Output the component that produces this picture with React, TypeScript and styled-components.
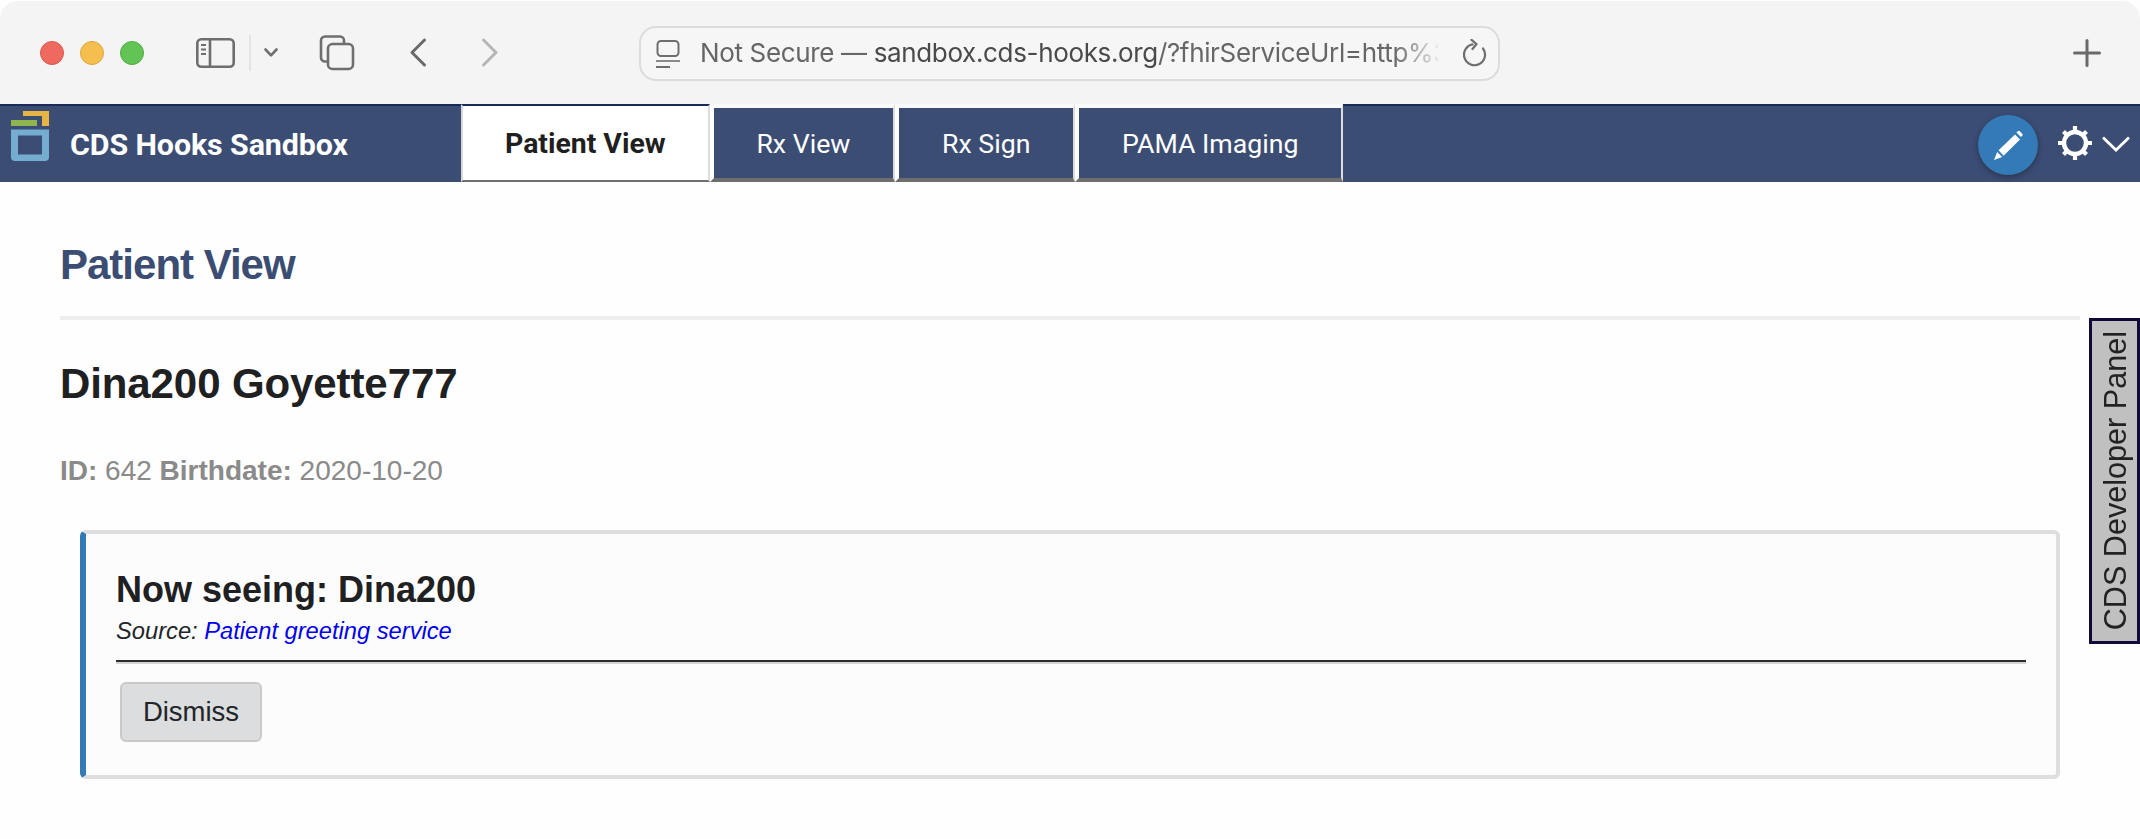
import React from "react";
import styled, { createGlobalStyle } from "styled-components";

const Global = createGlobalStyle`
  html, body { margin: 0; padding: 0; background: #fefefe; }
  body { width: 2140px; height: 839px; overflow: hidden; position: relative; font-family: "Liberation Sans", Arial, sans-serif; color: #212529; }
`;

const Toolbar = styled.header`
  height: 103px; margin-top: 1px; background: #f4f4f4; border-radius: 18px 18px 0 0;
  display: flex; align-items: center; position: relative;
`;
const Lights = styled.div`display: flex; gap: 16px; margin-left: 40px;`;
const Light = styled.span<{ $c: string; $b: string }>`
  width: 24px; height: 24px; border-radius: 50%; box-sizing: border-box;
  background: ${p => p.$c}; border: 1px solid ${p => p.$b};
`;
const ToolIcon = styled.svg<{ $left: number }>`
  display: block; flex: none; margin-left: ${p => p.$left}px; overflow: visible;
`;
const ToolDivider = styled.span`
  width: 2px; height: 36px; background: #e4e4e4; margin-left: 14px; flex: none;
`;
const UrlBar = styled.div`
  width: 861px; height: 55px; box-sizing: border-box; margin-left: 140px; margin-top: 1px;
  border: 2px solid #dcdcdc; border-radius: 17px; background: #f6f6f6;
  display: flex; align-items: center; padding: 0 10px 0 15px; flex: none;
`;
const PageGlyph = styled.svg`display: block; flex: none; margin-top: 1px;`;
const ReloadGlyph = styled.svg`display: block; flex: none; margin-left: 25px;`;
const UrlText = styled.div`
  width: 738px; margin-left: 20px; white-space: nowrap; overflow: hidden; flex: none;
  font: 400 26px/34px Inter, "Liberation Sans", sans-serif; letter-spacing: -0.35px; color: #666;
  -webkit-mask-image: linear-gradient(to right, #000 94%, rgba(0,0,0,.1) 100%);
  mask-image: linear-gradient(to right, #000 94%, rgba(0,0,0,.1) 100%);
`;
const Host = styled.span`color: #4a4a4a;`;
const PlusSlot = styled.div`margin-left: auto; margin-right: 39px; display: flex;`;

const Nav = styled.nav`
  height: 78px; box-sizing: border-box; background: #3c4d74; border-top: 2px solid #1a2b59;
  display: flex; align-items: stretch; color: #fff;
`;
const Brand = styled.div`
  width: 461px; flex: none; display: flex; align-items: center; box-sizing: border-box; padding-left: 11px;
`;
const BrandLogo = styled.svg`display: block; flex: none; margin-bottom: 16px;`;
const BrandName = styled.span`
  margin-left: 21px; margin-top: 2px; font: 700 30.4px/34px Roboto, "Liberation Sans", sans-serif; color: #fff; letter-spacing: -0.1px;
`;
const Tabs = styled.div`display: flex; align-items: stretch; margin-top: -2px;`;
const Tab = styled.div<{ $active?: boolean }>`
  box-sizing: border-box; display: flex; align-items: center; justify-content: center;
  font: ${p => (p.$active ? "700 28.4px" : "400 26.7px")}/34px Roboto, "Liberation Sans", sans-serif;
  padding: 2px ${p => (p.$active ? "42px" : "42.8px")} 0;
  color: ${p => (p.$active ? "#1f1f1f" : "#fff")};
  background: ${p => (p.$active ? "#fff" : "#3c4d74")};
  border-style: solid;
  border-width: 4px 2px ${p => (p.$active ? 2 : 4)}px 4px;
  border-color: ${p => (p.$active ? "#1a2b59" : "#fafafa")} #dcdcdc #6e6e6e #fff;
  ${p => (p.$active ? "border-top-width: 2px; border-left-width: 2px; border-left-color: #d8d8d8;" : "")}
`;
const NavRight = styled.div`
  margin-left: auto; display: flex; align-items: center; padding-right: 10px;
`;
const EditButton = styled.button`
  width: 60px; height: 60px; border-radius: 50%; border: 0; padding: 0; background: #337ab7;
  box-shadow: 0 2px 6px rgba(0,0,0,.35); display: flex; margin-top: 1px;
`;
const GearIcon = styled.svg`display: block; margin-left: 19px; margin-top: -3px;`;
const ChevronIcon = styled.svg`display: block; margin-left: 9px; margin-top: -1px;`;

const Main = styled.main`padding: 59px 60px 0;`;
const PageTitle = styled.h1`
  margin: 0; font: 700 42px/48px "Liberation Sans", Arial, sans-serif; color: #3c4d74; letter-spacing: -1px;
`;
const Rule = styled.hr`
  margin: 27px 0 0; border: 0; height: 4px; background: #eeeeee;
`;
const PatientName = styled.h2`
  margin: 40px 0 0; font: 700 42px/48px "Liberation Sans", Arial, sans-serif; color: #1f2022; letter-spacing: -0.1px;
`;
const PatientMeta = styled.div`
  margin-top: 45px; font: 400 28px/36px "Liberation Sans", Arial, sans-serif; color: #8a8a8a;
`;
const Label = styled.b`font-weight: 700;`;
const Card = styled.section`
  margin: 41px 20px 0; box-sizing: border-box; background: #fcfcfc;
  border: 4px solid #dedede; border-left: 6px solid #337ab7; border-radius: 6px;
  padding: 34px 30px 33px 30px;
`;
const CardTitle = styled.h3`
  margin: 0; font: 700 36px/44px "Liberation Sans", Arial, sans-serif; color: #1f2022;
`;
const CardSource = styled.div`
  margin-top: 4px; font: italic 400 23.7px/30px "Liberation Sans", Arial, sans-serif; color: #212529;
`;
const SourceLink = styled.a`color: #0000f0; text-decoration: none;`;
const CardRule = styled.hr`
  margin: 14px 0 0; border: 0; height: 2px; background: #2c2c2c; border-bottom: 2px solid #d4d4d4;
`;
const DismissButton = styled.button`
  display: block; margin: 18px 0 0 4px; width: 142px; height: 60px; box-sizing: border-box; padding: 0;
  background: #dcddde; border: 2px solid #cacaca; border-radius: 6px;
  font: 400 27.5px/34px "Liberation Sans", Arial, sans-serif; color: #212529;
`;
const DevPanel = styled.aside`
  position: absolute; right: 0; top: 318px; width: 51px; height: 326px; box-sizing: border-box;
  border: 3px solid #0f0a3a; background: #c0c0c0;
  display: flex; align-items: center; justify-content: center;
`;
const DevPanelText = styled.span`
  writing-mode: vertical-rl; transform: rotate(180deg); white-space: nowrap;
  font: 400 30.6px/34px "Liberation Sans", Arial, sans-serif; color: #222;
`;

export default function App() {
  return (
    <>
      <Global />
      <Toolbar>
        <Lights>
          <Light $c="#ee6a5f" $b="#d9564b" />
          <Light $c="#f5bf4f" $b="#dca63a" />
          <Light $c="#61c454" $b="#50ab44" />
        </Lights>
        <ToolIcon $left={52} width="39" height="30" viewBox="0 0 39 30" fill="none" stroke="#6e6e6e" strokeWidth="2.6">
          <rect x="1.3" y="1.3" width="36.4" height="27.4" rx="4" />
          <path d="M14 1.3v27.4" />
          <path d="M5 7h5M5 11.5h5M5 16h5" strokeWidth="2" />
        </ToolIcon>
        <ToolDivider />
        <ToolIcon $left={13} width="14" height="9" viewBox="0 0 14 9" fill="none" stroke="#6e6e6e" strokeWidth="2.6" strokeLinecap="round" strokeLinejoin="round">
          <path d="M1.5 1.5 7 7.3l5.5-5.8" />
        </ToolIcon>
        <ToolIcon $left={41} width="35" height="35" viewBox="0 0 35 35" fill="none" stroke="#6e6e6e" strokeWidth="2.6">
          <path d="M8 26.5H6a4 4 0 0 1-4-4V5.5a4 4 0 0 1 4-4h15a4 4 0 0 1 4 4V9" />
          <rect x="9" y="9" width="25" height="25" rx="4.5" />
        </ToolIcon>
        <ToolIcon $left={55} width="18" height="29" viewBox="0 0 18 29" fill="none" stroke="#6a6a6a" strokeWidth="3" strokeLinecap="round" strokeLinejoin="round">
          <path d="M15.5 2 3 14.5 15.5 27" />
        </ToolIcon>
        <ToolIcon $left={54} width="18" height="29" viewBox="0 0 18 29" fill="none" stroke="#b6b6b6" strokeWidth="3" strokeLinecap="round" strokeLinejoin="round">
          <path d="M2.5 2 15 14.5 2.5 27" />
        </ToolIcon>
        <UrlBar>
          <PageGlyph width="24" height="28" viewBox="0 0 24 28" fill="none" stroke="#6e6e6e" strokeWidth="2">
            <rect x="1.5" y="1" width="21" height="15" rx="3.5" />
            <path d="M0 21h24" stroke="#8a8a8a" />
            <path d="M0 27h14" />
          </PageGlyph>
          <UrlText>
            Not Secure — <Host>sandbox.cds-hooks.org</Host>/?fhirServiceUrl=http%3
          </UrlText>
          <ReloadGlyph width="24" height="28" viewBox="0 0 24 28" fill="none" stroke="#6e6e6e" strokeWidth="2.2" strokeLinecap="round" strokeLinejoin="round">
            <path d="M9.5 5.4A10.5 10.5 0 1 0 20 9.5" />
            <path d="M8.5 0.8 13.5 5 9.5 10" />
          </ReloadGlyph>
        </UrlBar>
        <PlusSlot>
          <svg width="28" height="28" viewBox="0 0 28 28" fill="none" stroke="#6a6a6a" strokeWidth="3" strokeLinecap="round">
            <path d="M14 1.5v25M1.5 14h25" />
          </svg>
        </PlusSlot>
      </Toolbar>
      <Nav>
        <Brand>
          <BrandLogo width="38" height="50" viewBox="0 0 38 50">
            <path d="M12 0h26v15h-7V5H12z" fill="#e5b645" />
            <rect x="0" y="9" width="26" height="6" fill="#8fb550" />
            <path fillRule="evenodd" d="M0 18.500h38v27.500a4 4 0 0 1-4 4H4a4 4 0 0 1-4-4zM7 24.500v19h24v-19z" fill="#74adcf" />
          </BrandLogo>
          <BrandName>CDS Hooks Sandbox</BrandName>
        </Brand>
        <Tabs>
          <Tab $active>Patient View</Tab>
          <Tab>Rx View</Tab>
          <Tab>Rx Sign</Tab>
          <Tab>PAMA Imaging</Tab>
        </Tabs>
        <NavRight>
          <EditButton aria-label="Edit">
            <svg width="60" height="60" viewBox="0 0 60 60" fill="#fff">
              <path d="M20.6 35.2 37 19.4l5 5.2-16.4 16.2z" />
              <path d="M16 45l3.2-8 5 5z" />
              <path d="M38.4 17.6l1.4-1.3a1.4 1.4 0 0 1 2 0l2.4 2.4a1.4 1.4 0 0 1 0 2l-1.3 1.4z" />
            </svg>
          </EditButton>
          <GearIcon width="36" height="36" viewBox="0 0 36 36" fill="none" stroke="#fff">
            <circle cx="18" cy="18" r="11" strokeWidth="4.4" />
            <path d="M18 1v6M18 29v6M1 18h6M29 18h6M6.5 6.5l4 4M25.5 25.5l4 4M29.5 6.5l-4 4M10.5 25.5l-4 4" strokeWidth="4.2" />
          </GearIcon>
          <ChevronIcon width="28" height="16" viewBox="0 0 28 16" fill="none" stroke="#fff" strokeWidth="2.8">
            <path d="M1 1.5 14 14 27 1.5" />
          </ChevronIcon>
        </NavRight>
      </Nav>
      <Main>
        <PageTitle>Patient View</PageTitle>
        <Rule />
        <PatientName>Dina200 Goyette777</PatientName>
        <PatientMeta>
          <Label>ID:</Label> 642 <Label>Birthdate:</Label> 2020-10-20
        </PatientMeta>
        <Card>
          <CardTitle>Now seeing: Dina200</CardTitle>
          <CardSource>
            Source: <SourceLink href="#">Patient greeting service</SourceLink>
          </CardSource>
          <CardRule />
          <DismissButton>Dismiss</DismissButton>
        </Card>
      </Main>
      <DevPanel>
        <DevPanelText>CDS Developer Panel</DevPanelText>
      </DevPanel>
    </>
  );
}
